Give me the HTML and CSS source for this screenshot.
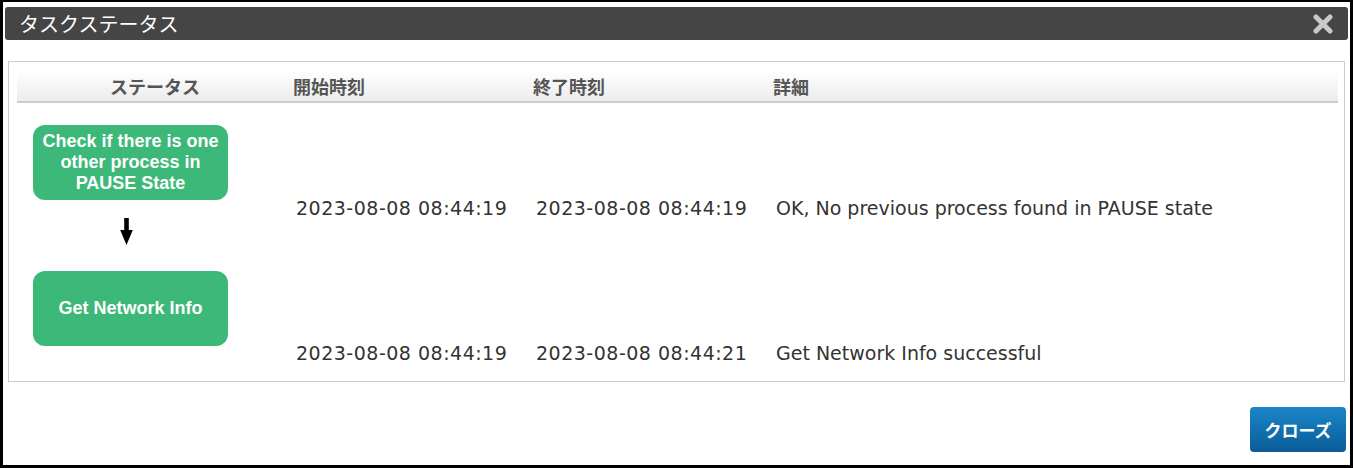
FILE: index.html
```html
<!DOCTYPE html>
<html lang="ja">
<head>
    <meta charset="UTF-8">
    <meta name="viewport" content="width=device-width, initial-scale=1.0">
    <title>タスクステータス</title>
    <link rel="stylesheet" href="styles.css">
</head>
<body>
    <div class="dialog">
        <div class="titlebar">
            <span class="title">タスクステータス</span>
            <svg class="close" width="20" height="20" viewBox="0 0 20 20">
                <path d="M3 3 L17 17 M17 3 L3 17" stroke="#c8c8c8" stroke-width="5" stroke-linecap="round"/>
            </svg>
        </div>

        <div class="panel">
            <div class="row head">
                <div class="cell status">ステータス</div>
                <div class="cell time">開始時刻</div>
                <div class="cell time">終了時刻</div>
                <div class="cell detail">詳細</div>
            </div>

            <div class="row first">
                <div class="cell status">
                    <div class="step">Check if there is one other process in PAUSE State</div>
                </div>
                <div class="cell time">2023-08-08 08:44:19</div>
                <div class="cell time">2023-08-08 08:44:19</div>
                <div class="cell detail">OK, No previous process found in PAUSE state</div>
            </div>

            <div class="row second">
                <div class="cell status">
                    <svg class="arrow" width="13" height="27" viewBox="0 0 13 27">
                        <path d="M4.2 0 H8.8 V12 H12.8 L6.5 27 L0.2 12 H4.2 Z" fill="#000"/>
                    </svg>
                    <div class="step">Get Network Info</div>
                </div>
                <div class="cell time">2023-08-08 08:44:19</div>
                <div class="cell time">2023-08-08 08:44:21</div>
                <div class="cell detail">Get Network Info successful</div>
            </div>
        </div>

        <div class="actions">
            <button class="btn-close">クローズ</button>
        </div>
    </div>
</body>
</html>
```

FILE: styles.css
```css
html, body {
    margin: 0;
    background-color: #fff;
}
.dialog {
    box-sizing: border-box;
    height: 468px;
    border: 3px solid #000;
    border-top-width: 2px;
    padding: 5px 2px 0 2px;
    font-family: "DejaVu Sans", sans-serif;
}
.titlebar {
    height: 33px;
    background-color: #454545;
    border-radius: 3px;
    display: flex;
    align-items: center;
    justify-content: space-between;
    padding: 0 15px 0 14px;
}
.title {
    color: #fff;
    font-family: "Noto Sans CJK JP", sans-serif;
    font-size: 20px;
    line-height: 33px;
}
.close {
    display: block;
}
.panel {
    margin: 21px 3px 0 3px;
    border: 1px solid #ccc;
    padding: 8px 6px 18px 8px;
}
.row {
    display: flex;
}
.cell {
    box-sizing: border-box;
}
.cell.status {
    width: 271px;
    flex: none;
}
.cell.time {
    width: 240px;
    flex: none;
}
.cell.detail {
    flex: 1;
}
.head {
    height: 31px;
    align-items: center;
    background: linear-gradient(#fff, #ececec);
    border-bottom: 2px solid #ccc;
    font-family: "Noto Sans CJK JP", sans-serif;
    font-weight: bold;
    font-size: 18px;
    color: #555;
}
.head .cell.status {
    text-align: center;
    padding-left: 5px;
}
.head .cell.time,
.head .cell.detail {
    padding-left: 5px;
}
.first .cell.status {
    padding: 22px 0 18px 16px;
}
.second .cell.status {
    padding: 0 0 17px 16px;
}
.first .cell.time,
.first .cell.detail,
.second .cell.time,
.second .cell.detail {
    align-self: flex-end;
    padding-left: 8px;
    font-size: 19px;
    line-height: 20px;
    color: #333;
}
.first .cell.time,
.second .cell.time {
    letter-spacing: 0.5px;
}
.step {
    box-sizing: border-box;
    width: 195px;
    height: 75px;
    background-color: #3cb878;
    border-radius: 12px;
    color: #fff;
    font-family: "Liberation Sans", Arial, sans-serif;
    font-weight: bold;
    font-size: 18px;
    line-height: 21px;
    text-align: center;
    display: flex;
    align-items: center;
    justify-content: center;
    padding: 0 8px;
}
.arrow {
    display: block;
    margin: 0 0 26px 87px;
}
.actions {
    display: flex;
    justify-content: flex-end;
    margin: 25px 2px 0 0;
}
.btn-close {
    width: 96px;
    height: 45px;
    border: none;
    border-radius: 4px;
    background: linear-gradient(#1b86c8, #0a5c98);
    color: #fff;
    font-family: "Noto Sans CJK JP", sans-serif;
    font-weight: bold;
    font-size: 17px;
    padding: 0;
}
```
